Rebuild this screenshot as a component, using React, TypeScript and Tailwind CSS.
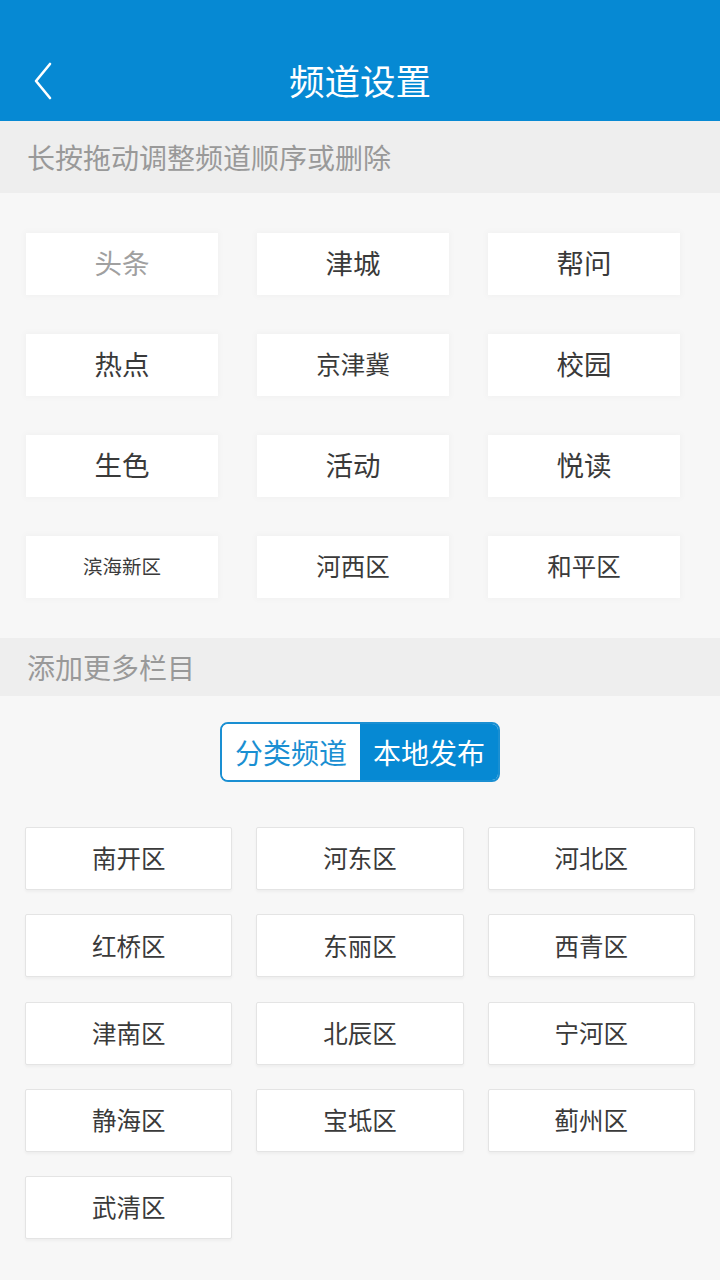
import React from "react";

const myChannels = [
  { name: "头条", muted: true },
  { name: "津城" },
  { name: "帮问" },
  { name: "热点" },
  { name: "京津冀", size: "text-[24.5px]" },
  { name: "校园" },
  { name: "生色" },
  { name: "活动" },
  { name: "悦读" },
  { name: "滨海新区", size: "text-[19.5px]" },
  { name: "河西区", size: "text-[24.5px]" },
  { name: "和平区", size: "text-[24.5px]" },
];

const localChannels = [
  "南开区",
  "河东区",
  "河北区",
  "红桥区",
  "东丽区",
  "西青区",
  "津南区",
  "北辰区",
  "宁河区",
  "静海区",
  "宝坻区",
  "蓟州区",
  "武清区",
];

const font = { fontFamily: '"Noto Sans CJK SC", "Noto Sans", sans-serif' };

export default function App() {
  return (
    <div className="w-[720px] h-[1280px] bg-[#f7f7f7] overflow-hidden" style={font}>
      {/* header */}
      <div className="h-[121px] bg-[#0689d3] pt-[40px]">
        <div className="relative h-[80px] flex items-center justify-center">
          <svg
            className="absolute left-[32px] top-[22px]"
            width="22"
            height="38"
            viewBox="0 0 22 38"
            fill="none"
            stroke="white"
            strokeWidth="2.6"
            strokeLinecap="round"
            strokeLinejoin="round"
          >
            <polyline points="18,2 4,19 18,36" />
          </svg>
          <span className="text-white text-[35.5px] leading-none">频道设置</span>
        </div>
      </div>

      {/* section 1 */}
      <div className="h-[72px] bg-[#eeeeee] flex items-center pl-[27px]">
        <span className="text-[28px] leading-none text-[#999999]">长按拖动调整频道顺序或删除</span>
      </div>
      <div className="pt-[40px] pb-[40px]">
        <div className="ml-[26px] w-[654px] grid grid-cols-3 gap-x-[39px] gap-y-[39px]">
          {myChannels.map((c) => (
            <div
              key={c.name}
              className="h-[62px] bg-white flex items-center justify-center shadow-[0_0_6px_2px_rgba(0,0,0,0.025)]"
            >
              <span
                className={`${c.size ?? "text-[27.5px]"} leading-none -mt-[2px] ${
                  c.muted ? "text-[#a0a0a0]" : "text-[#3a3a3a]"
                }`}
              >
                {c.name}
              </span>
            </div>
          ))}
        </div>
      </div>

      {/* section 2 */}
      <div className="h-[58px] bg-[#eeeeee] flex items-center pl-[27px]">
        <span className="text-[28px] leading-none text-[#999999]">添加更多栏目</span>
      </div>
      <div className="flex justify-center pt-[26px]">
        <div className="flex h-[60px] w-[280px] rounded-[8px] border-2 border-[#1a8fd2] overflow-hidden">
          <div className="flex-1 bg-white flex items-center justify-center text-[28px] leading-none text-[#1a8fd2]">
            分类频道
          </div>
          <div className="flex-1 bg-[#0689d3] flex items-center justify-center text-[28px] leading-none text-white">
            本地发布
          </div>
        </div>
      </div>
      <div className="pt-[45px]">
        <div className="ml-[25px] w-[670px] grid grid-cols-3 gap-x-[24px] gap-y-[24.25px]">
          {localChannels.map((n) => (
            <div
              key={n}
              className="h-[63px] bg-white border border-[#e4e4e4] rounded-[2px] flex items-center justify-center shadow-[0_2px_3px_rgba(0,0,0,0.04)]"
            >
              <span className="text-[24.5px] leading-none text-[#3a3a3a]">{n}</span>
            </div>
          ))}
        </div>
      </div>
    </div>
  );
}
